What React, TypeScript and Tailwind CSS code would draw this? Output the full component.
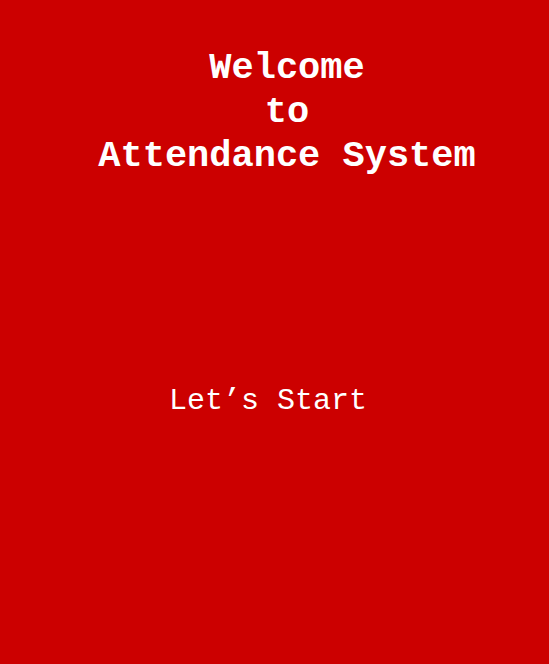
export default function App() {
  return (
    <div className="min-h-screen w-full bg-[#cc0000] font-['Liberation_Mono',monospace] text-white">
      {/* Heading */}
      <h1 className="pt-[46px] pl-[25px] text-center text-[37px] font-bold leading-[44px]">
        Welcome
        <br />
        to
        <br />
        Attendance System
      </h1>

      {/* Start button */}
      <div className="mt-[206px] flex justify-center pr-[13px]">
        <button className="text-[30px] leading-[34px]">Let’s Start</button>
      </div>
    </div>
  );
}
